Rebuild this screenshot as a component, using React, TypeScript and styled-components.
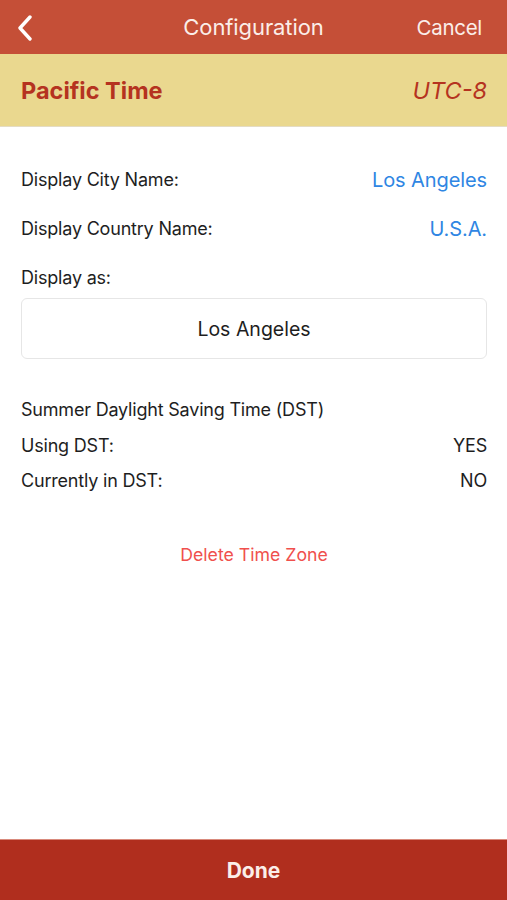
import React from 'react';
import styled, { createGlobalStyle } from 'styled-components';

const GlobalStyle = createGlobalStyle`
  html, body {
    margin: 0;
    padding: 0;
    background: #fff;
    font-family: Inter, "Noto Sans", sans-serif;
  }
`;

type Row = { label: string; value: string };

const nameRows: Row[] = [
  { label: 'Display City Name:', value: 'Los Angeles' },
  { label: 'Display Country Name:', value: 'U.S.A.' },
];

const dstRows: Row[] = [
  { label: 'Using DST:', value: 'YES' },
  { label: 'Currently in DST:', value: 'NO' },
];

const App: React.FC = () => {
  return (
    <Page>
      <GlobalStyle />
      <NavBar>
        <BackButton aria-label="back">
          <svg width="16" height="26" viewBox="0 0 16 26">
            <path d="M13 2 L3 13 L13 24" fill="none" stroke="#fff" strokeWidth="3.4" strokeLinecap="round" strokeLinejoin="round" />
          </svg>
        </BackButton>
        <NavTitle>Configuration</NavTitle>
        <NavAction>Cancel</NavAction>
      </NavBar>

      <ZoneHeader>
        <ZoneName>Pacific Time</ZoneName>
        <ZoneOffset>UTC-8</ZoneOffset>
      </ZoneHeader>

      <Content>
        <Section>
          {nameRows.map((r) => (
            <InfoRow key={r.label}>
              <Label>{r.label}</Label>
              <LinkValue>{r.value}</LinkValue>
            </InfoRow>
          ))}
          <InfoRow>
            <Label>Display as:</Label>
          </InfoRow>
          <DisplayBox>Los Angeles</DisplayBox>
        </Section>

        <DstSection>
          <DstRow>
            <Label>Summer Daylight Saving Time (DST)</Label>
          </DstRow>
          {dstRows.map((r) => (
            <DstRow key={r.label}>
              <Label>{r.label}</Label>
              <Value>{r.value}</Value>
            </DstRow>
          ))}
        </DstSection>

        <DeleteButton>Delete Time Zone</DeleteButton>
      </Content>

      <DoneBar>Done</DoneBar>
    </Page>
  );
};

export default App;

const Page = styled.div`
  display: flex;
  flex-direction: column;
  width: 507px;
  height: 900px;
  overflow: hidden;
`;

const NavBar = styled.header`
  display: grid;
  grid-template-columns: 1fr auto 1fr;
  align-items: center;
  height: 54px;
  padding: 0 25px;
  background: #c54f37;
  color: #fbeee9;
  box-sizing: border-box;
  flex-shrink: 0;
`;

const BackButton = styled.div`
  display: flex;
  align-items: center;
  margin-left: -8px;
  padding-top: 1px;
`;

const NavTitle = styled.div`
  font-size: 22px;
  letter-spacing: -0.1px;
`;

const NavAction = styled.div`
  justify-self: end;
  font-size: 20.5px;
  letter-spacing: -0.3px;
`;

const ZoneHeader = styled.div`
  display: flex;
  align-items: center;
  justify-content: space-between;
  height: 73px;
  padding: 0 20px 0 21px;
  background: #ead88f;
  border-bottom: 1px solid #e4dcc4;
  box-sizing: border-box;
  flex-shrink: 0;
`;

const ZoneName = styled.div`
  font-size: 23.5px;
  font-weight: 700;
  color: #b5331f;
`;

const ZoneOffset = styled.div`
  font-size: 23.5px;
  font-style: italic;
  color: #b5331f;
`;

const Content = styled.main`
  flex: 1;
  display: flex;
  flex-direction: column;
  padding: 28px 20px 0 21px;
`;

const Section = styled.section`
  display: flex;
  flex-direction: column;
`;

const InfoRow = styled.div`
  display: flex;
  align-items: center;
  justify-content: space-between;
  height: 49px;
`;

const Label = styled.span`
  font-size: 18px;
  color: #1e1e1e;
  letter-spacing: -0.2px;
`;

const LinkValue = styled.span`
  font-size: 20px;
  color: #2f86e3;
  letter-spacing: -0.1px;
`;

const Value = styled.span`
  font-size: 18px;
  color: #1e1e1e;
  letter-spacing: -0.2px;
`;

const DisplayBox = styled.div`
  display: flex;
  align-items: center;
  justify-content: center;
  height: 61px;
  margin-top: -4px;
  border: 1px solid #e6e6e6;
  border-radius: 6px;
  box-sizing: border-box;
  font-size: 19.5px;
  color: #1e1e1e;
`;

const DstSection = styled.section`
  display: flex;
  flex-direction: column;
  margin-top: 33px;
`;

const DstRow = styled.div`
  display: flex;
  align-items: center;
  justify-content: space-between;
  height: 35.5px;
`;

const DeleteButton = styled.div`
  align-self: center;
  margin-top: 45px;
  font-size: 17.7px;
  color: #f0504d;
`;

const DoneBar = styled.footer`
  display: flex;
  align-items: center;
  justify-content: center;
  height: 61px;
  background: #b02e1e;
  border-top: 1px solid #d98a7c;
  box-sizing: border-box;
  color: #fbeee9;
  font-size: 21px;
  font-weight: 700;
  flex-shrink: 0;
`;
